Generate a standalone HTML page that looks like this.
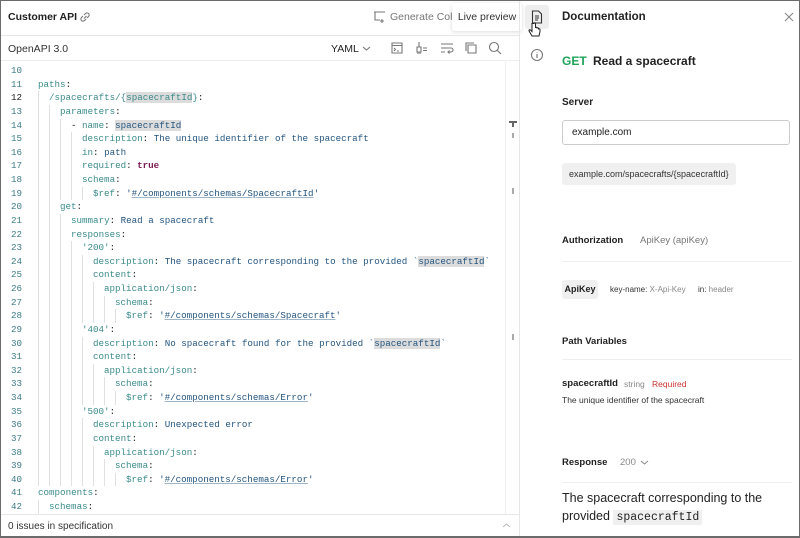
<!DOCTYPE html>
<html><head><meta charset="utf-8"><style>
*{margin:0;padding:0;box-sizing:border-box}
body{width:800px;height:538px;overflow:hidden;background:#fff;font-family:"Liberation Sans",sans-serif;color:#212121;position:relative}
.frame{position:absolute;inset:0;border:1px solid #6b6b6b;border-bottom-width:2px}
.abs{position:absolute}
.code{position:absolute;left:0;top:64px;width:505px;font-family:"Liberation Mono",monospace;font-size:9.2px}
.row{height:13.625px;line-height:13.625px;white-space:pre;position:relative}
.ln{position:absolute;left:0;width:22px;text-align:right;color:#3d7b86}
.tx{position:absolute;left:38px}
.ind{display:inline-block;width:11px;height:13.625px;vertical-align:top;background:linear-gradient(#e0e0e0,#e0e0e0) 0 0/1px 100% no-repeat}
.k{color:#3a8a8a}.v{color:#24557f}.s{color:#24557f}.b{color:#7a1a55;font-weight:bold}
.hl{background:#dcdcdc}
.u{text-decoration:underline;text-decoration-color:#9fb5c8}
.ico{stroke:#777;fill:none;stroke-width:1.1}
</style></head><body>
<div class="abs" style="left:8px;top:11px;font-size:10.5px;font-weight:bold">Customer API</div>
<svg class="abs" style="left:78px;top:10px" width="14" height="14" viewBox="0 0 14 14"><path class="ico" d="M6 8.5l2.5-2.5M5 6L3.5 7.5a2 2 0 0 0 3 3L8 9M9 8l1.5-1.5a2 2 0 0 0-3-3L6 5"/></svg>
<svg class="abs" style="left:373px;top:10px" width="13" height="13" viewBox="0 0 13 13"><path class="ico" d="M1 2h11M2 2v8h5M9 9v4M7 11h4"/></svg>
<div class="abs" style="left:390px;top:11px;font-size:10.5px;color:#777">Generate Colle</div>
<div class="abs" style="left:452px;top:3px;width:70px;height:28px;background:#fff;box-shadow:0 1px 4px rgba(0,0,0,.15);border-radius:3px;font-size:10.5px;line-height:28px;text-align:center;color:#333">Live preview</div>
<div class="abs" style="left:525px;top:5px;width:24px;height:24px;background:#eee;border-radius:3px"></div>
<svg class="abs" style="left:531px;top:10px" width="12" height="14" viewBox="0 0 12 14"><path d="M1.5 1h6l3 3v9h-9z M4 6h4M4 8h4M4 10h3" stroke="#333" fill="none" stroke-width="1.1"/></svg>
<svg class="abs" style="left:528px;top:22px" width="14" height="16" viewBox="0 0 14 16"><path d="M4 1.5v8l-1.5-1.5c-1-.8-2 .3-1.3 1.2L4 14h7l1-4.5V7.5c0-1-1.5-1-1.5 0v-1c0-1-1.5-1-1.5 0v-.5c0-1-1.5-1-1.5 0V1.5c0-1-1.5-1-1.5 0z" fill="#fff" stroke="#222" stroke-width="1"/></svg>
<svg class="abs" style="left:530px;top:48px" width="14" height="14" viewBox="0 0 14 14"><circle cx="7" cy="7" r="5.5" class="ico"/><path d="M7 6v4M7 4v.5" stroke="#777" stroke-width="1.2"/></svg>
<div class="abs" style="left:0;top:35px;width:519px;height:1px;background:#e6e6e6"></div>
<div class="abs" style="left:519px;top:0;width:1px;height:538px;background:#e6e6e6"></div>
<div class="abs" style="left:8px;top:43px;font-size:10.5px;color:#333">OpenAPI 3.0</div>
<div class="abs" style="left:331px;top:43px;font-size:10.5px;color:#222">YAML</div>
<svg class="abs" style="left:362px;top:45px" width="9" height="7" viewBox="0 0 9 7"><path d="M1 2l3.5 3L8 2" class="ico"/></svg>
<svg class="abs" style="left:390px;top:41px" width="14" height="14" viewBox="0 0 14 14"><path class="ico" d="M2 2h10v10H2zM2 4.5h10M4 7l1.5 1.5L4 10M7 10h2"/></svg>
<svg class="abs" style="left:415px;top:41px" width="14" height="14" viewBox="0 0 14 14"><path class="ico" d="M4 1v5M2 6h4v5H2zM3 11v2M5 11v2M8 7h4M8 9.5h4"/></svg>
<svg class="abs" style="left:440px;top:41px" width="14" height="14" viewBox="0 0 14 14"><path class="ico" d="M1 3h12M1 7h10a2 2 0 0 1 0 4H8M9.5 9.5L8 11l1.5 1.5M1 11h4"/></svg>
<svg class="abs" style="left:464px;top:41px" width="14" height="14" viewBox="0 0 14 14"><path class="ico" d="M4 4h8v8H4zM2 10V2h8"/></svg>
<svg class="abs" style="left:488px;top:41px" width="14" height="14" viewBox="0 0 14 14"><circle cx="6" cy="6" r="4.5" class="ico"/><path class="ico" d="M9.5 9.5L13 13"/></svg>
<div class="abs" style="left:0;top:60px;width:519px;height:1px;background:#eee"></div>
<div class="abs" style="left:505px;top:62px;width:1px;height:452px;background:#eee"></div>
<div class="abs" style="left:509px;top:121px;width:8px;height:2px;background:#666"></div>
<div class="abs" style="left:512px;top:122px;width:2px;height:5px;background:#666"></div>
<div class="abs" style="left:512px;top:133px;width:2px;height:5px;background:#aaa"></div>
<div class="abs" style="left:512px;top:188px;width:2px;height:6px;background:#aaa"></div>
<div class="abs" style="left:512px;top:334px;width:2px;height:6px;background:#aaa"></div>
<div class="code">
<div class="row"><span class="ln">10</span></div>
<div class="row"><span class="ln">11</span><span class="tx"><span class="k">paths</span>:</span></div>
<div class="row"><span class="ln" style="color:#222">12</span><span class="tx"><span class="ind"></span><span class="k">/spacecrafts/{<span class="hl">spacecraftId</span>}</span>:</span></div>
<div class="row"><span class="ln">13</span><span class="tx"><span class="ind"></span><span class="ind"></span><span class="k">parameters</span>:</span></div>
<div class="row"><span class="ln">14</span><span class="tx"><span class="ind"></span><span class="ind"></span><span class="ind"></span>- <span class="k">name</span>: <span class="v hl">spacecraftId</span></span></div>
<div class="row"><span class="ln">15</span><span class="tx"><span class="ind"></span><span class="ind"></span><span class="ind"></span><span class="ind"></span><span class="k">description</span>: <span class="v">The unique identifier of the spacecraft</span></span></div>
<div class="row"><span class="ln">16</span><span class="tx"><span class="ind"></span><span class="ind"></span><span class="ind"></span><span class="ind"></span><span class="k">in</span>: <span class="v">path</span></span></div>
<div class="row"><span class="ln">17</span><span class="tx"><span class="ind"></span><span class="ind"></span><span class="ind"></span><span class="ind"></span><span class="k">required</span>: <span class="b">true</span></span></div>
<div class="row"><span class="ln">18</span><span class="tx"><span class="ind"></span><span class="ind"></span><span class="ind"></span><span class="ind"></span><span class="k">schema</span>:</span></div>
<div class="row"><span class="ln">19</span><span class="tx"><span class="ind"></span><span class="ind"></span><span class="ind"></span><span class="ind"></span><span class="ind"></span><span class="k">$ref</span>: <span class="s">'<span class="u">#/components/schemas/SpacecraftId</span>'</span></span></div>
<div class="row"><span class="ln">20</span><span class="tx"><span class="ind"></span><span class="ind"></span><span class="k">get</span>:</span></div>
<div class="row"><span class="ln">21</span><span class="tx"><span class="ind"></span><span class="ind"></span><span class="ind"></span><span class="k">summary</span>: <span class="v">Read a spacecraft</span></span></div>
<div class="row"><span class="ln">22</span><span class="tx"><span class="ind"></span><span class="ind"></span><span class="ind"></span><span class="k">responses</span>:</span></div>
<div class="row"><span class="ln">23</span><span class="tx"><span class="ind"></span><span class="ind"></span><span class="ind"></span><span class="ind"></span><span class="k">'200'</span>:</span></div>
<div class="row"><span class="ln">24</span><span class="tx"><span class="ind"></span><span class="ind"></span><span class="ind"></span><span class="ind"></span><span class="ind"></span><span class="k">description</span>: <span class="v">The spacecraft corresponding to the provided `<span class="hl">spacecraftId</span>`</span></span></div>
<div class="row"><span class="ln">25</span><span class="tx"><span class="ind"></span><span class="ind"></span><span class="ind"></span><span class="ind"></span><span class="ind"></span><span class="k">content</span>:</span></div>
<div class="row"><span class="ln">26</span><span class="tx"><span class="ind"></span><span class="ind"></span><span class="ind"></span><span class="ind"></span><span class="ind"></span><span class="ind"></span><span class="k">application/json</span>:</span></div>
<div class="row"><span class="ln">27</span><span class="tx"><span class="ind"></span><span class="ind"></span><span class="ind"></span><span class="ind"></span><span class="ind"></span><span class="ind"></span><span class="ind"></span><span class="k">schema</span>:</span></div>
<div class="row"><span class="ln">28</span><span class="tx"><span class="ind"></span><span class="ind"></span><span class="ind"></span><span class="ind"></span><span class="ind"></span><span class="ind"></span><span class="ind"></span><span class="ind"></span><span class="k">$ref</span>: <span class="s">'<span class="u">#/components/schemas/Spacecraft</span>'</span></span></div>
<div class="row"><span class="ln">29</span><span class="tx"><span class="ind"></span><span class="ind"></span><span class="ind"></span><span class="ind"></span><span class="k">'404'</span>:</span></div>
<div class="row"><span class="ln">30</span><span class="tx"><span class="ind"></span><span class="ind"></span><span class="ind"></span><span class="ind"></span><span class="ind"></span><span class="k">description</span>: <span class="v">No spacecraft found for the provided `<span class="hl">spacecraftId</span>`</span></span></div>
<div class="row"><span class="ln">31</span><span class="tx"><span class="ind"></span><span class="ind"></span><span class="ind"></span><span class="ind"></span><span class="ind"></span><span class="k">content</span>:</span></div>
<div class="row"><span class="ln">32</span><span class="tx"><span class="ind"></span><span class="ind"></span><span class="ind"></span><span class="ind"></span><span class="ind"></span><span class="ind"></span><span class="k">application/json</span>:</span></div>
<div class="row"><span class="ln">33</span><span class="tx"><span class="ind"></span><span class="ind"></span><span class="ind"></span><span class="ind"></span><span class="ind"></span><span class="ind"></span><span class="ind"></span><span class="k">schema</span>:</span></div>
<div class="row"><span class="ln">34</span><span class="tx"><span class="ind"></span><span class="ind"></span><span class="ind"></span><span class="ind"></span><span class="ind"></span><span class="ind"></span><span class="ind"></span><span class="ind"></span><span class="k">$ref</span>: <span class="s">'<span class="u">#/components/schemas/Error</span>'</span></span></div>
<div class="row"><span class="ln">35</span><span class="tx"><span class="ind"></span><span class="ind"></span><span class="ind"></span><span class="ind"></span><span class="k">'500'</span>:</span></div>
<div class="row"><span class="ln">36</span><span class="tx"><span class="ind"></span><span class="ind"></span><span class="ind"></span><span class="ind"></span><span class="ind"></span><span class="k">description</span>: <span class="v">Unexpected error</span></span></div>
<div class="row"><span class="ln">37</span><span class="tx"><span class="ind"></span><span class="ind"></span><span class="ind"></span><span class="ind"></span><span class="ind"></span><span class="k">content</span>:</span></div>
<div class="row"><span class="ln">38</span><span class="tx"><span class="ind"></span><span class="ind"></span><span class="ind"></span><span class="ind"></span><span class="ind"></span><span class="ind"></span><span class="k">application/json</span>:</span></div>
<div class="row"><span class="ln">39</span><span class="tx"><span class="ind"></span><span class="ind"></span><span class="ind"></span><span class="ind"></span><span class="ind"></span><span class="ind"></span><span class="ind"></span><span class="k">schema</span>:</span></div>
<div class="row"><span class="ln">40</span><span class="tx"><span class="ind"></span><span class="ind"></span><span class="ind"></span><span class="ind"></span><span class="ind"></span><span class="ind"></span><span class="ind"></span><span class="ind"></span><span class="k">$ref</span>: <span class="s">'<span class="u">#/components/schemas/Error</span>'</span></span></div>
<div class="row"><span class="ln">41</span><span class="tx"><span class="k">components</span>:</span></div>
<div class="row"><span class="ln">42</span><span class="tx"><span class="ind"></span><span class="k">schemas</span>:</span></div>
</div>
<div class="abs" style="left:0;top:514px;width:519px;height:1px;background:#e6e6e6"></div>
<div class="abs" style="left:0;top:515px;width:519px;height:22px;background:#fff"></div>
<div class="abs" style="left:8px;top:521px;font-size:10px;color:#333">0 issues in specification</div>
<svg class="abs" style="left:502px;top:522px" width="9" height="7" viewBox="0 0 9 7"><path d="M1 5l3.5-3L8 5" stroke="#bbb" fill="none"/></svg>
<div class="abs" style="left:562px;top:11px;font-size:11.5px;font-weight:bold;color:#222">Documentation</div>
<svg class="abs" style="left:784px;top:12px" width="10" height="10" viewBox="0 0 10 10"><path d="M1 1l8 8M9 1L1 9" stroke="#888" stroke-width="1.1"/></svg>
<div class="abs" style="left:562px;top:54px;font-size:12px;font-weight:bold;color:#1ea35a">GET</div>
<div class="abs" style="left:593px;top:54px;font-size:12px;font-weight:bold;color:#222">Read a spacecraft</div>
<div class="abs" style="left:562px;top:97px;font-size:10px;font-weight:bold;color:#222">Server</div>
<div class="abs" style="left:562px;top:120px;width:228px;height:25px;border:1px solid #ccc;border-radius:3px;font-size:10px;line-height:23px;padding-left:9px;color:#222">example.com</div>
<div class="abs" style="left:562px;top:163px;width:174px;height:22px;background:#f0f0f0;border-radius:3px;font-size:9px;line-height:22px;padding-left:7px;color:#333">example.com/spacecrafts/{spacecraftId}</div>
<div class="abs" style="left:562px;top:235px;font-size:9.5px;font-weight:bold;color:#222">Authorization</div>
<div class="abs" style="left:640px;top:235px;font-size:9.5px;color:#777">ApiKey (apiKey)</div>
<div class="abs" style="left:562px;top:261px;width:230px;height:1px;background:#eee"></div>
<div class="abs" style="left:562px;top:280px;width:36px;height:19px;background:#f0f0f0;border-radius:3px;font-size:9px;font-weight:bold;line-height:19px;text-align:center;color:#222">ApiKey</div>
<div class="abs" style="left:610px;top:285px;font-size:8px;color:#333">key-name: <span style="color:#888">X-Api-Key</span></div>
<div class="abs" style="left:698px;top:285px;font-size:8px;color:#333">in: <span style="color:#888">header</span></div>
<div class="abs" style="left:562px;top:336px;font-size:9.5px;font-weight:bold;color:#222">Path Variables</div>
<div class="abs" style="left:562px;top:359px;width:230px;height:1px;background:#eee"></div>
<div class="abs" style="left:562px;top:378px;font-size:9.5px;font-weight:bold;color:#222">spacecraftId</div>
<div class="abs" style="left:624px;top:379px;font-size:8.5px;color:#888">string</div>
<div class="abs" style="left:652px;top:379px;font-size:8.5px;color:#c33">Required</div>
<div class="abs" style="left:562px;top:395px;font-size:8.5px;color:#333">The unique identifier of the spacecraft</div>
<div class="abs" style="left:562px;top:457px;font-size:9.5px;font-weight:bold;color:#222">Response</div>
<div class="abs" style="left:620px;top:457px;font-size:9.5px;color:#888">200</div>
<svg class="abs" style="left:640px;top:459px" width="9" height="7" viewBox="0 0 9 7"><path d="M1 2l3.5 3L8 2" stroke="#888" fill="none"/></svg>
<div class="abs" style="left:562px;top:482px;width:230px;height:1px;background:#eee"></div>
<div class="abs" style="left:562px;top:489px;font-size:12.5px;line-height:18px;color:#222;width:232px">The spacecraft corresponding to the provided <span style="font-family:'Liberation Mono',monospace;font-size:11.5px;background:#f0f0f0;padding:1px 3px">spacecraftId</span></div>
<div class="frame"></div>
</body></html>
